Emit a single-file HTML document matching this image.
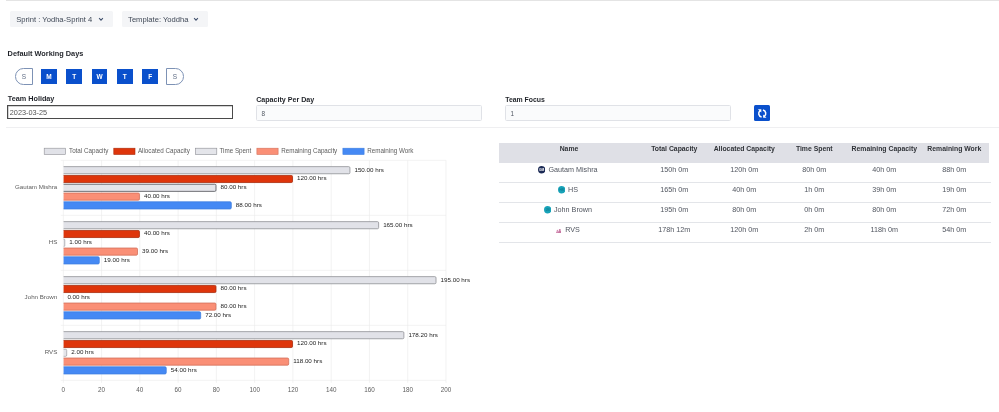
<!DOCTYPE html>
<html><head><meta charset="utf-8"><title>Capacity</title>
<style>
html,body{margin:0;padding:0;background:#fff;}
body{width:999px;height:412px;position:relative;overflow:hidden;font-family:"Liberation Sans",Arial,sans-serif;color:#172b4d;}
.topline{position:absolute;left:6px;top:0;width:993px;height:0.7px;background:#e4e4e4;}
.dd{position:absolute;top:11px;height:16px;background:#f4f5f7;border-radius:1.5px;color:#3f4856;font-size:7.6px;line-height:17px;box-sizing:border-box;white-space:nowrap;}
.dd svg{position:absolute;top:6.3px;}
.lbl{position:absolute;font-weight:bold;font-size:7.35px;color:#1f2228;white-space:nowrap;line-height:10px;}
.day{position:absolute;top:68.5px;width:15.7px;height:15.6px;box-sizing:border-box;font-size:6.5px;line-height:15.6px;text-align:center;font-weight:bold;}
.day.on{background:#0a50cc;color:#fff;}
.day.off{top:67.9px;width:17.6px;height:16.8px;border:0.7px solid #7d92b5;color:#5e6c84;background:#fff;font-weight:normal;line-height:15.4px;}
.inp{position:absolute;box-sizing:border-box;font-size:6.4px;color:#505762;line-height:15px;padding-left:4.6px;}
.inp.a{left:6.8px;top:104.5px;width:226.6px;height:14.8px;border:1px solid #4a4a4a;box-shadow:inset 0.5px 0.5px 0 #aaa;background:#fff;padding-left:2px;line-height:13.4px;color:#555;font-size:7.3px;}
.inp.b{top:105px;height:16px;border:0.8px solid #e0e2e7;background:#fafbfc;border-radius:1.5px;}
.rbtn{position:absolute;left:753.9px;top:104.7px;width:16.3px;height:16.4px;background:#0a50cc;border-radius:1.5px;overflow:hidden;}
.hr{position:absolute;left:6px;top:126.5px;width:993px;height:1px;background:#efeff1;}
.chart{position:absolute;left:0;top:130px;}
table{position:absolute;left:498.7px;top:143px;width:492.6px;border-collapse:collapse;table-layout:fixed;font-size:7.2px;color:#50555f;}
th{background:#dfe0e6;height:19.6px;padding:0 0 9.3px 0;box-sizing:border-box;font-weight:bold;color:#2f3237;font-size:6.85px;text-align:center;line-height:8px;vertical-align:bottom;}
td{height:20px;box-sizing:border-box;padding:0 0 8.1px 0;text-align:center;border-bottom:0.8px solid #e3e5e9;line-height:8px;vertical-align:bottom;}
.av{display:inline-block;vertical-align:-1.5px;margin-right:3px;}
.av.rvs{vertical-align:-0.6px;margin-right:4px;}
#wrap{position:absolute;left:0;top:0;width:999px;height:412px;will-change:transform;transform:translateZ(0);}
</style></head><body><div id="wrap">
<div class="topline"></div>
<div class="dd" style="left:10px;width:103px;padding-left:6.3px;">Sprint : Yodha-Sprint 4<svg style="left:88.2px" width="6" height="5" viewBox="0 0 6 5"><path d="M1.1 1.2 L3 3.1 L4.9 1.2" fill="none" stroke="#42526e" stroke-width="1.1"/></svg></div>
<div class="dd" style="left:121.5px;width:86.4px;padding-left:6.6px;">Template: Yoddha<svg style="left:71.4px" width="6" height="5" viewBox="0 0 6 5"><path d="M1.1 1.2 L3 3.1 L4.9 1.2" fill="none" stroke="#42526e" stroke-width="1.1"/></svg></div>
<div class="lbl" style="left:7.6px;top:48.5px;">Default Working Days</div>
<div class="day off" style="left:15.2px;border-radius:8.4px 0 0 8.4px;">S</div>
<div class="day on" style="left:41.1px;">M</div>
<div class="day on" style="left:66.4px;">T</div>
<div class="day on" style="left:91.7px;">W</div>
<div class="day on" style="left:117px;">T</div>
<div class="day on" style="left:142.3px;">F</div>
<div class="day off" style="left:166px;border-radius:0 8.4px 8.4px 0;">S</div>
<div class="lbl" style="left:7.8px;top:94.3px;font-size:7.25px">Team Holiday</div>
<div class="inp a">2023-03-25</div>
<div class="lbl" style="left:256.2px;top:94.7px;font-size:7.12px">Capacity Per Day</div>
<div class="inp b" style="left:256px;width:226px;">8</div>
<div class="lbl" style="left:505.2px;top:94.7px;font-size:6.9px">Team Focus</div>
<div class="inp b" style="left:505px;width:226px;">1</div>
<div class="rbtn"><svg width="16.5" height="16.5" viewBox="0 0 16.5 16.5"><path d="M6.2 5.6A3.5 3.5 0 0 0 7.6 11.9" fill="none" stroke="#fff" stroke-width="1.5"/><path d="M8.9 5.1A3.5 3.5 0 0 1 10.3 11.4" fill="none" stroke="#fff" stroke-width="1.5"/><path d="M3.9 4.2h3.4v3.2z" fill="#fff"/><path d="M12.5 12.8h-3.4v-3.2z" fill="#fff"/></svg></div>
<div class="hr"></div>
<svg class="chart" width="500" height="282" viewBox="0 130 500 282" font-family="Liberation Sans, Arial, sans-serif">
<line x1="63.30" y1="160.3" x2="63.30" y2="382.8" stroke="#e9e9e9" stroke-width="0.6"/>
<text x="63.30" y="391.8" font-size="6.3" fill="#5c5c5c" text-anchor="middle">0</text>
<line x1="101.57" y1="160.3" x2="101.57" y2="382.8" stroke="#e9e9e9" stroke-width="0.6"/>
<text x="101.57" y="391.8" font-size="6.3" fill="#5c5c5c" text-anchor="middle">20</text>
<line x1="139.84" y1="160.3" x2="139.84" y2="382.8" stroke="#e9e9e9" stroke-width="0.6"/>
<text x="139.84" y="391.8" font-size="6.3" fill="#5c5c5c" text-anchor="middle">40</text>
<line x1="178.11" y1="160.3" x2="178.11" y2="382.8" stroke="#e9e9e9" stroke-width="0.6"/>
<text x="178.11" y="391.8" font-size="6.3" fill="#5c5c5c" text-anchor="middle">60</text>
<line x1="216.38" y1="160.3" x2="216.38" y2="382.8" stroke="#e9e9e9" stroke-width="0.6"/>
<text x="216.38" y="391.8" font-size="6.3" fill="#5c5c5c" text-anchor="middle">80</text>
<line x1="254.65" y1="160.3" x2="254.65" y2="382.8" stroke="#e9e9e9" stroke-width="0.6"/>
<text x="254.65" y="391.8" font-size="6.3" fill="#5c5c5c" text-anchor="middle">100</text>
<line x1="292.92" y1="160.3" x2="292.92" y2="382.8" stroke="#e9e9e9" stroke-width="0.6"/>
<text x="292.92" y="391.8" font-size="6.3" fill="#5c5c5c" text-anchor="middle">120</text>
<line x1="331.19" y1="160.3" x2="331.19" y2="382.8" stroke="#e9e9e9" stroke-width="0.6"/>
<text x="331.19" y="391.8" font-size="6.3" fill="#5c5c5c" text-anchor="middle">140</text>
<line x1="369.46" y1="160.3" x2="369.46" y2="382.8" stroke="#e9e9e9" stroke-width="0.6"/>
<text x="369.46" y="391.8" font-size="6.3" fill="#5c5c5c" text-anchor="middle">160</text>
<line x1="407.73" y1="160.3" x2="407.73" y2="382.8" stroke="#e9e9e9" stroke-width="0.6"/>
<text x="407.73" y="391.8" font-size="6.3" fill="#5c5c5c" text-anchor="middle">180</text>
<line x1="446.00" y1="160.3" x2="446.00" y2="382.8" stroke="#e9e9e9" stroke-width="0.6"/>
<text x="446.00" y="391.8" font-size="6.3" fill="#5c5c5c" text-anchor="middle">200</text>
<line x1="60.8" y1="160.30" x2="446.0" y2="160.30" stroke="#e9e9e9" stroke-width="0.6"/>
<line x1="60.8" y1="215.30" x2="446.0" y2="215.30" stroke="#e9e9e9" stroke-width="0.6"/>
<line x1="60.8" y1="270.30" x2="446.0" y2="270.30" stroke="#e9e9e9" stroke-width="0.6"/>
<line x1="60.8" y1="325.30" x2="446.0" y2="325.30" stroke="#e9e9e9" stroke-width="0.6"/>
<line x1="60.8" y1="380.30" x2="446.0" y2="380.30" stroke="#e9e9e9" stroke-width="0.6"/>
<rect x="44.199999999999996" y="148.2" width="21.2" height="6.3" fill="#e1e2e8" stroke="#8f9096" stroke-width="0.6"/>
<text x="69.0" y="152.5" font-size="6.28" fill="#5c5c5c">Total Capacity</text>
<rect x="113.80000000000001" y="148.2" width="21.2" height="6.3" fill="#de350b" stroke="#a82a0a" stroke-width="0.6"/>
<text x="137.89999999999998" y="152.5" font-size="6.28" fill="#5c5c5c">Allocated Capacity</text>
<rect x="195.6" y="148.2" width="21.2" height="6.3" fill="#e4e5ea" stroke="#8b8c93" stroke-width="0.6"/>
<text x="219.5" y="152.5" font-size="6.28" fill="#5c5c5c">Time Spent</text>
<rect x="256.9" y="148.2" width="21.2" height="6.3" fill="#fa8f76" stroke="#d2705b" stroke-width="0.6"/>
<text x="281.2" y="152.5" font-size="6.28" fill="#5c5c5c">Remaining Capacity</text>
<rect x="342.9" y="148.2" width="21.2" height="6.3" fill="#4589f4" stroke="#3f7fe0" stroke-width="0.6"/>
<text x="367.2" y="152.5" font-size="6.28" fill="#5c5c5c">Remaining Work</text>
<text x="57.3" y="189.20" font-size="6.2" fill="#5c5c5c" text-anchor="end">Gautam Mishra</text>
<path d="M63.60 166.64H348.73Q349.93 166.64 349.93 167.84V172.56Q349.93 173.76 348.73 173.76H63.60" fill="#e1e2e8" stroke="#8f9096" stroke-width="0.8"/>
<text x="354.43" y="171.60" font-size="6.25" fill="#222">150.00 hrs</text>
<path d="M63.60 175.44H291.32Q292.52 175.44 292.52 176.64V181.36Q292.52 182.56 291.32 182.56H63.60" fill="#de350b" stroke="#a82a0a" stroke-width="0.8"/>
<text x="297.02" y="180.40" font-size="6.25" fill="#222">120.00 hrs</text>
<path d="M63.60 184.24H214.78Q215.98 184.24 215.98 185.44V190.16Q215.98 191.36 214.78 191.36H63.60" fill="#e4e5ea" stroke="#4e4f55" stroke-width="0.8"/>
<text x="220.48" y="189.20" font-size="6.25" fill="#222">80.00 hrs</text>
<path d="M63.60 193.04H138.24Q139.44 193.04 139.44 194.24V198.96Q139.44 200.16 138.24 200.16H63.60" fill="#fa8f76" stroke="#d2705b" stroke-width="0.8"/>
<text x="143.94" y="198.00" font-size="6.25" fill="#222">40.00 hrs</text>
<path d="M63.60 201.84H230.09Q231.29 201.84 231.29 203.04V207.76Q231.29 208.96 230.09 208.96H63.60" fill="#4589f4" stroke="#3f7fe0" stroke-width="0.8"/>
<text x="235.79" y="206.80" font-size="6.25" fill="#222">88.00 hrs</text>
<text x="57.3" y="244.20" font-size="6.2" fill="#5c5c5c" text-anchor="end">HS</text>
<path d="M63.60 221.64H377.43Q378.63 221.64 378.63 222.84V227.56Q378.63 228.76 377.43 228.76H63.60" fill="#e1e2e8" stroke="#8f9096" stroke-width="0.8"/>
<text x="383.13" y="226.60" font-size="6.25" fill="#222">165.00 hrs</text>
<path d="M63.60 230.44H138.24Q139.44 230.44 139.44 231.64V236.36Q139.44 237.56 138.24 237.56H63.60" fill="#de350b" stroke="#a82a0a" stroke-width="0.8"/>
<text x="143.94" y="235.40" font-size="6.25" fill="#222">40.00 hrs</text>
<path d="M63.60 239.24H64.21Q64.81 239.24 64.81 239.85V245.75Q64.81 246.36 64.21 246.36H63.60" fill="#e4e5ea" stroke="#4e4f55" stroke-width="0.8" stroke-opacity="0.45"/>
<text x="69.31" y="244.20" font-size="6.25" fill="#222">1.00 hrs</text>
<path d="M63.60 248.04H136.33Q137.53 248.04 137.53 249.24V253.96Q137.53 255.16 136.33 255.16H63.60" fill="#fa8f76" stroke="#d2705b" stroke-width="0.8"/>
<text x="142.03" y="253.00" font-size="6.25" fill="#222">39.00 hrs</text>
<path d="M63.60 256.84H98.06Q99.26 256.84 99.26 258.04V262.76Q99.26 263.96 98.06 263.96H63.60" fill="#4589f4" stroke="#3f7fe0" stroke-width="0.8"/>
<text x="103.76" y="261.80" font-size="6.25" fill="#222">19.00 hrs</text>
<text x="57.3" y="299.20" font-size="6.2" fill="#5c5c5c" text-anchor="end">John Brown</text>
<path d="M63.60 276.64H434.83Q436.03 276.64 436.03 277.84V282.56Q436.03 283.76 434.83 283.76H63.60" fill="#e1e2e8" stroke="#8f9096" stroke-width="0.8"/>
<text x="440.53" y="281.60" font-size="6.25" fill="#222">195.00 hrs</text>
<path d="M63.60 285.44H214.78Q215.98 285.44 215.98 286.64V291.36Q215.98 292.56 214.78 292.56H63.60" fill="#de350b" stroke="#a82a0a" stroke-width="0.8"/>
<text x="220.48" y="290.40" font-size="6.25" fill="#222">80.00 hrs</text>
<text x="67.40" y="299.20" font-size="6.25" fill="#222">0.00 hrs</text>
<path d="M63.60 303.04H214.78Q215.98 303.04 215.98 304.24V308.96Q215.98 310.16 214.78 310.16H63.60" fill="#fa8f76" stroke="#d2705b" stroke-width="0.8"/>
<text x="220.48" y="308.00" font-size="6.25" fill="#222">80.00 hrs</text>
<path d="M63.60 311.84H199.47Q200.67 311.84 200.67 313.04V317.76Q200.67 318.96 199.47 318.96H63.60" fill="#4589f4" stroke="#3f7fe0" stroke-width="0.8"/>
<text x="205.17" y="316.80" font-size="6.25" fill="#222">72.00 hrs</text>
<text x="57.3" y="354.20" font-size="6.2" fill="#5c5c5c" text-anchor="end">RVS</text>
<path d="M63.60 331.64H402.69Q403.89 331.64 403.89 332.84V337.56Q403.89 338.76 402.69 338.76H63.60" fill="#e1e2e8" stroke="#8f9096" stroke-width="0.8"/>
<text x="408.39" y="336.60" font-size="6.25" fill="#222">178.20 hrs</text>
<path d="M63.60 340.44H291.32Q292.52 340.44 292.52 341.64V346.36Q292.52 347.56 291.32 347.56H63.60" fill="#de350b" stroke="#a82a0a" stroke-width="0.8"/>
<text x="297.02" y="345.40" font-size="6.25" fill="#222">120.00 hrs</text>
<path d="M63.60 349.24H65.53Q66.73 349.24 66.73 350.44V355.16Q66.73 356.36 65.53 356.36H63.60" fill="#e4e5ea" stroke="#4e4f55" stroke-width="0.8" stroke-opacity="0.45"/>
<text x="71.23" y="354.20" font-size="6.25" fill="#222">2.00 hrs</text>
<path d="M63.60 358.04H287.49Q288.69 358.04 288.69 359.24V363.96Q288.69 365.16 287.49 365.16H63.60" fill="#fa8f76" stroke="#d2705b" stroke-width="0.8"/>
<text x="293.19" y="363.00" font-size="6.25" fill="#222">118.00 hrs</text>
<path d="M63.60 366.84H165.03Q166.23 366.84 166.23 368.04V372.76Q166.23 373.96 165.03 373.96H63.60" fill="#4589f4" stroke="#3f7fe0" stroke-width="0.8"/>
<text x="170.73" y="371.80" font-size="6.25" fill="#222">54.00 hrs</text>
</svg>
<table>
<colgroup><col style="width:140.6px"><col style="width:70px"><col style="width:70px"><col style="width:70px"><col style="width:70px"><col style="width:70px"><col style="width:2px"></colgroup>
<tr><th>Name</th><th>Total Capacity</th><th>Allocated Capacity</th><th>Time Spent</th><th>Remaining Capacity</th><th>Remaining Work</th><th style="background:none"></th></tr>
<tr><td style="padding-right:2.4px"><svg class="av" width="7.4" height="7.4" viewBox="0 0 10 10"><circle cx="5" cy="5" r="5" fill="#1b2a55"/><text x="5" y="6.6" font-size="4.4" font-weight="bold" fill="#fff" text-anchor="middle" font-family="Liberation Sans, sans-serif">GM</text></svg>Gautam Mishra</td><td>150h 0m</td><td>120h 0m</td><td>80h 0m</td><td>40h 0m</td><td>88h 0m</td><td></td></tr>
<tr><td style="padding-right:2.4px"><svg class="av" width="7.4" height="7.4" viewBox="0 0 10 10"><circle cx="5" cy="5" r="5" fill="#17a2b8"/><text x="5" y="6.6" font-size="4.4" fill="#0d6f80" text-anchor="middle" font-family="Liberation Sans, sans-serif">HS</text></svg>HS</td><td>165h 0m</td><td>40h 0m</td><td>1h 0m</td><td>39h 0m</td><td>19h 0m</td><td></td></tr>
<tr><td style="padding-right:2.4px"><svg class="av" width="7.4" height="7.4" viewBox="0 0 10 10"><circle cx="5" cy="5" r="5" fill="#17a2b8"/><text x="5" y="6.6" font-size="4.4" fill="#0d6f80" text-anchor="middle" font-family="Liberation Sans, sans-serif">JB</text></svg>John Brown</td><td>195h 0m</td><td>80h 0m</td><td>0h 0m</td><td>80h 0m</td><td>72h 0m</td><td></td></tr>
<tr><td style="padding-right:2.4px"><svg class="av rvs" width="5.4" height="4" viewBox="0 0 11 8"><circle cx="3" cy="3.2" r="1.6" fill="#d48cb2"/><path d="M0 8c0-2.6 1.3-3.4 3-3.4S6 5.400 6 8z" fill="#d48cb2"/><circle cx="7.8" cy="2" r="2" fill="#c777a2"/><path d="M4.300 8c0-3.300 1.500-4.300 3.500-4.300S11 4.700 11 8z" fill="#c777a2"/></svg>RVS</td><td>178h 12m</td><td>120h 0m</td><td>2h 0m</td><td>118h 0m</td><td>54h 0m</td><td></td></tr>
</table>
</div></body></html>
